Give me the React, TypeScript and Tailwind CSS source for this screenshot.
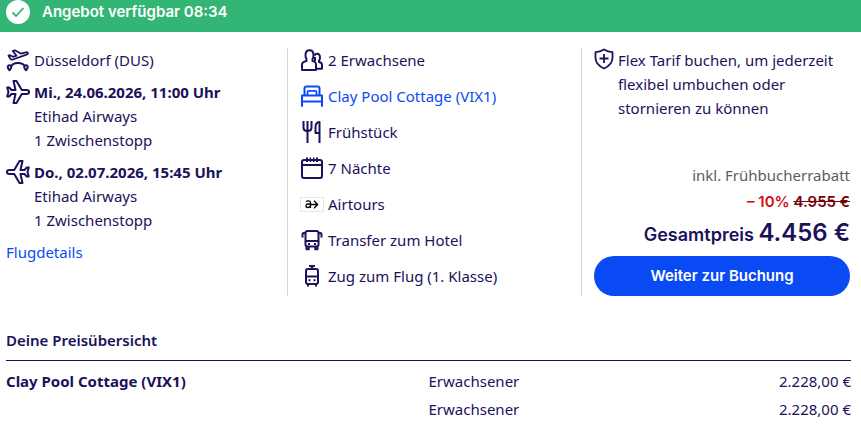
import type { ReactNode } from "react";

const Icon = ({
  children,
  className = "",
}: {
  children: ReactNode;
  className?: string;
}) => (
  <svg
    viewBox="0 0 24 24"
    fill="none"
    stroke="currentColor"
    strokeWidth="2"
    strokeLinejoin="round"
    aria-hidden="true"
    className={`size-6 shrink-0 ${className}`}
  >
    {children}
  </svg>
);

const TakeOffIcon = () => (
  <Icon>
    <path strokeWidth="1.8" d="M2.500 7.500 4 7.200l3 1.600 3.500-1.100L6.700 3 9 2.300l6 3.400 4.700-1.300c1.300-.4 2.300.1 2.300.8 0 .6-.6 1.100-1.500 1.400L7 11.500c-1.200.4-2 .1-2.700-.8z" />
    <path strokeWidth="1.8" d="M5 18.500c1-2 4-3.500 7-3.500s6 1.500 7 3.500" />
    <path d="M3.500 17.200a1.800 1.800 0 0 1 1.800 1.800c0 1.200-1.800 3.300-1.800 3.300S1.700 20.200 1.700 19a1.800 1.800 0 0 1 1.800-1.800zM20 17.200a1.800 1.800 0 0 1 1.800 1.800c0 1.200-1.800 3.300-1.800 3.300s-1.800-2.100-1.800-3.300a1.800 1.800 0 0 1 1.800-1.800z" />
  </Icon>
);

const PlaneIcon = ({ className }: { className?: string }) => (
  <Icon className={className}>
    <path d="M1.200 7.500h2L5.500 10H9.500L7.500 1h3l5.300 9h4.700c1.500 0 2.600.9 2.600 2s-1.100 2-2.600 2h-4.700l-5.300 9h-3l2-9H5.500L3.200 16.500h-2L2.500 12z" />
  </Icon>
);

const PeopleIcon = () => (
  <Icon>
    <path d="M2 22v-5.500c0-1.800 1.200-2.700 4.500-3.500v-2C5.500 10 5.500 9 5.500 7c0-3 1.500-4.800 4-4.800S13.500 4 13.500 7c0 2 0 3-1 4v2c3.300.8 3.500 1.700 3.500 3.500V22z" />
    <path d="M14.500 7.500c.5-1.200 1.300-1.800 2.500-1.800 2 0 3 1.500 3 3.800 0 1.500-.2 2.300-1 3v1.500c2.500.5 3 1.300 3 2.800v4h-6M15 9v4" />
  </Icon>
);

const BedIcon = () => (
  <Icon>
    <path d="M2 22.800V11.500h20v11.300M4.500 11.500V4.500c0-1.300.8-2 2-2h11c1.200 0 2 .7 2 2v7M2 17.500h20" />
    <path strokeWidth="1.8" d="M7.500 11.500V8.300c0-.9.500-1.400 1.400-1.400h6.200c.9 0 1.400.5 1.400 1.400v3.200" />
  </Icon>
);

const CutleryIcon = () => (
  <Icon>
    <path d="M7.500 11v12M3.500 1v6.500c0 2.300 1.500 3.500 4 3.500s4-1.200 4-3.500V1M7.500 1v10M19.500 23V2c-3 .3-4 2-4 5v6h4" />
  </Icon>
);

const CalendarIcon = () => (
  <Icon>
    <rect x="2" y="4" width="20" height="18" rx="2" />
    <path d="M2 9h20M7 1.500v4.500M17 1.500v4.500" />
    <path strokeWidth="1.500" d="M10.400 1.500v4.500M13.700 1.500v4.500" />
  </Icon>
);

const BusIcon = () => (
  <Icon>
    <rect x="5.500" y="3" width="13" height="15.500" rx="2" />
    <path d="M5.500 5H3.800c-.8 0-1.300.5-1.300 1.300V9.500M18.500 5h1.700c.8 0 1.300.5 1.300 1.300V9.500M5.500 13h13M6.500 18v3.200h2.200V18.500M17.500 18v3.200h-2.200V18.500" />
    <path d="M8 16h2M14 16h2" />
  </Icon>
);

const TrainIcon = () => (
  <Icon>
    <path d="M9 2h6M12 2v3M6 12.500h12M8 20v2.500M16 20v2.500" />
    <rect x="6" y="5" width="12" height="15" rx="2" />
    <path d="M8.500 16.200h2M13.500 16.200h2" />
  </Icon>
);

const ShieldIcon = () => (
  <Icon>
    <path strokeWidth="1.800" d="M10 1.500c2.500 1.600 5.200 2.500 8.500 2.700v5.600c0 4.800-3.300 8.400-8.500 10.700-5.200-2.300-8.500-5.900-8.500-10.700V4.200C4.800 4 7.500 3.100 10 1.500z" />
    <path strokeWidth="1.800" d="M10 6v9M5.500 10.500h9" />
  </Icon>
);

const AirtoursLogo = () => (
  <span className="flex h-[15px] w-6 shrink-0 items-center justify-center border border-gray-200 text-black">
    <svg
      viewBox="0 0 14 9"
      fill="none"
      stroke="currentColor"
      strokeWidth="1.300"
      aria-hidden="true"
      className="h-[9px] w-[14px]"
    >
      <path d="M1 1.500c1.500-.9 4.500-1 4.500 1V8M5.500 4H3C.3 4 .3 7.500 2.700 7.500c1.500 0 2.800-.8 2.800-2.500M5.500 4.500H13M9 .8l3.700 3.700L9 8.200" />
    </svg>
  </span>
);

const FLIGHTS = [
  { date: "Mi., 24.06.2026, 11:00 Uhr", iconClass: "" },
  { date: "Do., 02.07.2026, 15:45 Uhr", iconClass: "-scale-x-100" },
];

const SERVICES = [
  { icon: <PeopleIcon />, label: "2 Erwachsene" },
  { icon: <BedIcon />, label: "Clay Pool Cottage (VIX1)", href: "#zimmer" },
  { icon: <CutleryIcon />, label: "Frühstück" },
  { icon: <CalendarIcon />, label: "7 Nächte" },
  { icon: <AirtoursLogo />, label: "Airtours" },
  { icon: <BusIcon />, label: "Transfer zum Hotel" },
  { icon: <TrainIcon />, label: "Zug zum Flug (1. Klasse)" },
];

const PRICES = [
  { room: "Clay Pool Cottage (VIX1)", traveller: "Erwachsener", price: "2.228,00 €" },
  { room: "", traveller: "Erwachsener", price: "2.228,00 €" },
];

const OfferBanner = () => (
  <div className="flex h-8 items-center gap-3 bg-[#32b575] px-1.5 pb-2 font-['Inter',sans-serif] text-[15px] font-semibold text-white">
    <svg viewBox="0 0 24 24" fill="none" aria-hidden="true" className="size-6 shrink-0">
      <circle cx="12" cy="12" r="12" fill="white" />
      <path d="m6.500 12.500 3.500 3.500 7.500-8" stroke="#32b575" strokeWidth="1.800" />
    </svg>
    <span>Angebot verfügbar 08:34</span>
  </div>
);

const FlightColumn = () => (
  <section className="flex flex-col gap-2">
    <div className="flex gap-1">
      <TakeOffIcon />
      <span>Düsseldorf (DUS)</span>
    </div>
    {FLIGHTS.map(({ date, iconClass }) => (
      <div key={date} className="flex gap-1">
        <PlaneIcon className={iconClass} />
        <div>
          <p className="font-bold">{date}</p>
          <p>Etihad Airways</p>
          <p>1 Zwischenstopp</p>
        </div>
      </div>
    ))}
    <a href="#flugdetails" className="self-start text-[#0a4af5]">
      Flugdetails
    </a>
  </section>
);

const ServiceColumn = () => (
  <ul className="flex flex-col gap-3 border-l border-gray-300 pl-3 pb-2">
    {SERVICES.map(({ icon, label, href }) => (
      <li key={label}>
        {href ? (
          <a href={href} className="flex items-center gap-1 text-[#0a4af5]">
            {icon}
            {label}
          </a>
        ) : (
          <span className="flex items-center gap-1">
            {icon}
            {label}
          </span>
        )}
      </li>
    ))}
  </ul>
);

const PriceColumn = () => (
  <section className="flex flex-col justify-between border-l border-gray-300 pr-px pl-3">
    <div className="flex">
      <ShieldIcon />
      <p>Flex Tarif buchen, um jederzeit flexibel umbuchen oder stornieren zu können</p>
    </div>
    <div className="text-right font-['Inter',sans-serif] font-semibold">
      <p className="font-['Noto_Sans',sans-serif] font-normal text-[#5c5c5c]">
        inkl. Frühbucherrabatt
      </p>
      <p className="pt-[3px] text-[15px] text-[#d40e14]">
        – 10% <s className="text-[#73020c]">4.955 €</s>
      </p>
      <p className="pt-[3px] pb-[5px] text-lg/8">
        Gesamtpreis <span className="text-2xl/8">4.456 €</span>
      </p>
      <button
        type="button"
        className="h-10 w-full rounded-full bg-[#0a4af5] text-[15px] text-white"
      >
        Weiter zur Buchung
      </button>
    </div>
  </section>
);

const PriceOverview = () => (
  <section className="pt-8">
    <h2 className="border-b border-[#1b115c] pb-2 font-semibold">Deine Preisübersicht</h2>
    <table className="mt-1.5 w-full">
      <tbody>
        {PRICES.map(({ room, traveller, price }, index) => (
          <tr key={index} className="h-7">
            <th scope="row" className="w-1/2 p-0 text-left font-bold">
              {room}
            </th>
            <td className="p-0">{traveller}</td>
            <td className="p-0 text-right">{price}</td>
          </tr>
        ))}
      </tbody>
    </table>
  </section>
);

export default function App() {
  return (
    <main className="bg-white font-['Noto_Sans',sans-serif] text-[15px]/6 font-normal text-[#1b115c]">
      <OfferBanner />
      <div className="pt-4 pr-2.5 pl-1.5">
        <div className="grid grid-cols-[281fr_294fr_270fr]">
          <FlightColumn />
          <ServiceColumn />
          <PriceColumn />
        </div>
        <PriceOverview />
      </div>
    </main>
  );
}
